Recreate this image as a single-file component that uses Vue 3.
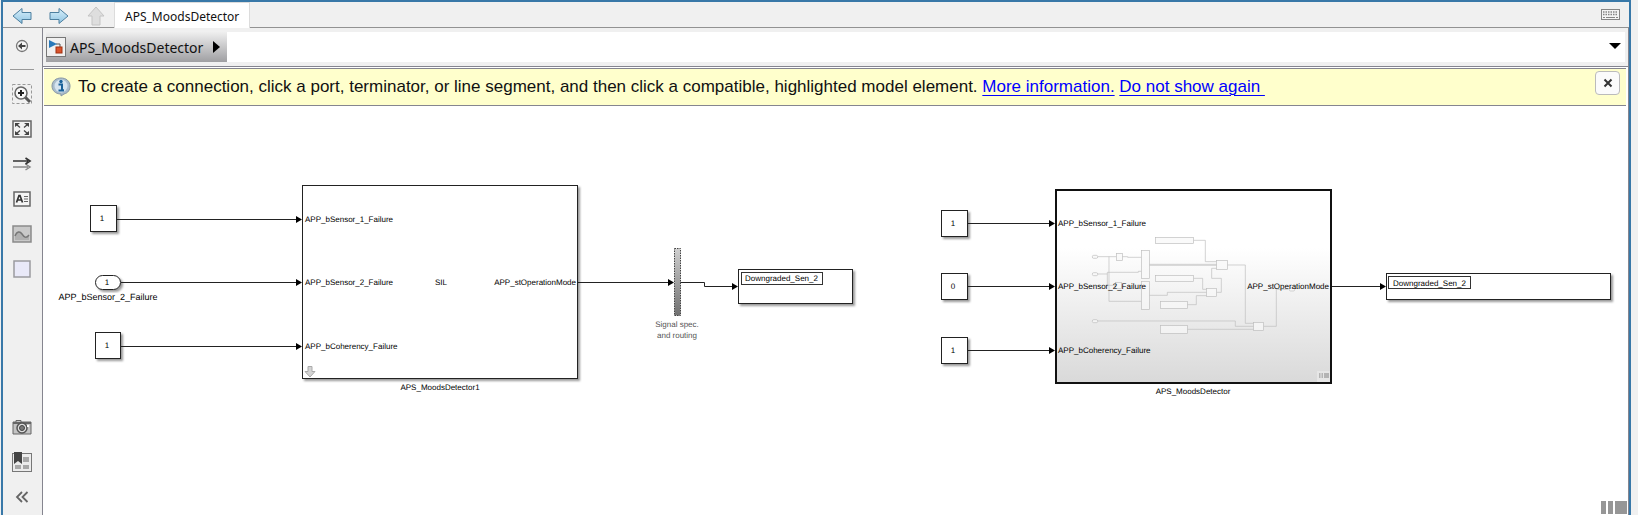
<script setup>
const leftRows = [
  { y: 219.5, from: 117, name: 'APP_bSensor_1_Failure' },
  { y: 282.5, from: 121, name: 'APP_bSensor_2_Failure' },
  { y: 346.5, from: 121, name: 'APP_bCoherency_Failure' },
]
const rightRows = [
  { y: 223.5, value: 1, name: 'APP_bSensor_1_Failure' },
  { y: 286.5, value: 0, name: 'APP_bSensor_2_Failure' },
  { y: 350.5, value: 1, name: 'APP_bCoherency_Failure' },
]
const arrow = (x, y) => `M${x - 6} ${y - 3.5}L${x} ${y}L${x - 6} ${y + 3.5}Z`
const baseline = (y) => Math.floor(y) + 3
</script>

<template>
  <div class="window">
    <header class="tabs">
      <button class="nav" aria-label="Back">
        <svg width="20" height="18" viewBox="0 0 20 18">
          <path d="M1 9L10 1.500V5.500H19V12.500H10V16.500Z" fill="url(#blueFill)" stroke="#4d7f9f" />
        </svg>
      </button>
      <button class="nav" aria-label="Forward">
        <svg width="20" height="18" viewBox="0 0 20 18">
          <path d="M19 9L10 1.500V5.500H1V12.500H10V16.500Z" fill="url(#blueFill)" stroke="#4d7f9f" />
        </svg>
      </button>
      <button class="nav" aria-label="Up">
        <svg width="18" height="20" viewBox="0 0 18 20">
          <path d="M9 1L17 10H13V19H5V10H1Z" fill="#dedede" stroke="#c4c4c4" />
        </svg>
      </button>
      <button class="tab">APS_MoodsDetector</button>
      <button class="keyboard" aria-label="Keyboard">
        <svg width="20" height="12" viewBox="0 0 20 12">
          <rect x=".5" y=".5" width="18" height="10" fill="#f4f4f4" stroke="#858585" />
          <path d="M2 3H17M2 5.500H17" stroke="#858585" stroke-width="1.500" stroke-dasharray="1.500 1" />
          <path d="M2 8.500H4M5 8.500H14M15 8.500H17" stroke="#858585" />
        </svg>
      </button>
    </header>

    <div class="body">
      <nav class="palette">
        <button class="tool" aria-label="Hide browser">
          <svg width="14" height="14" viewBox="0 0 14 14">
            <circle cx="7" cy="7" r="5.500" fill="#f5f5f5" stroke="#777" stroke-width="1.300" />
            <path d="M3 7L7 3.500V6H10.500V8H7V10.500Z" fill="#444" />
          </svg>
        </button>
        <hr class="rule" />
        <button class="tool" aria-label="Zoom">
          <svg width="20" height="20" viewBox="0 0 20 20">
            <rect x=".5" y=".5" width="19" height="19" fill="none" stroke="#999" stroke-dasharray="3 2" />
            <path d="M13 13L18 18" stroke="#555" stroke-width="3" />
            <circle cx="9" cy="9" r="6" fill="#f8f8f8" stroke="#666" stroke-width="1.500" />
            <path d="M6 9H12M9 6V12" stroke="#222" stroke-width="2" />
          </svg>
        </button>
        <button class="tool" aria-label="Fit to view">
          <svg width="20" height="18" viewBox="0 0 20 18">
            <rect x="1" y="1" width="18" height="16" fill="#f2f2f2" stroke="#666" stroke-width="1.500" />
            <path d="M3 3H8L3 7ZM17 3H12L17 7ZM3 15H8L3 11ZM17 15H12L17 11Z" fill="#444" />
            <path d="M4.500 4.500L8 7.500M15.500 4.500L12 7.500M4.500 13.500L8 10.500M15.500 13.500L12 10.500" stroke="#444" stroke-width="1.300" />
          </svg>
        </button>
        <button class="tool" aria-label="Sample time">
          <svg width="20" height="14" viewBox="0 0 20 14">
            <path d="M1 10H16M13.500 7L18 10L13.500 13" fill="none" stroke="#888" stroke-width="1.500" />
            <path d="M1 4H16M13.500 1L18 4L13.500 7" fill="none" stroke="#333" stroke-width="1.700" />
          </svg>
        </button>
        <button class="tool" aria-label="Annotation">
          <svg width="18" height="16" viewBox="0 0 18 16">
            <rect x="1" y="1" width="16" height="14" fill="#f5f5f5" stroke="#666" stroke-width="1.500" />
            <path d="M3.500 11.500L6 4.500H7L9.500 11.500M4.500 9H8.500" fill="none" stroke="#333" stroke-width="1.700" />
            <path d="M11 5.500H15M11 8H15M11 10.500H15" stroke="#666" />
          </svg>
        </button>
        <button class="tool" aria-label="Image">
          <svg width="20" height="18" viewBox="0 0 20 18">
            <rect x="1" y="1" width="18" height="16" fill="#c9c9c9" stroke="#8a8a8a" stroke-width="1.500" />
            <path d="M3 11C5 6 8 6 10 9S14 14 17 10V15H3Z" fill="#b0b0b0" />
            <path d="M3 11C5 6 8 6 10 9S14 14 17 10" fill="none" stroke="#777" stroke-width="1.500" />
          </svg>
        </button>
        <button class="tool" aria-label="Area">
          <svg width="18" height="18" viewBox="0 0 18 18">
            <rect x="1" y="1" width="16" height="16" fill="#e9e9f8" stroke="#9a9a9f" stroke-width="1.500" />
          </svg>
        </button>
        <button class="tool last-group" aria-label="Screenshot">
          <svg width="20" height="16" viewBox="0 1 20 16">
            <path d="M1 4H4V2.500H9V4H19V16H1Z" fill="#c4c4c4" stroke="#666" />
            <path d="M1 6H19V4H1Z" fill="#666" />
            <circle cx="10" cy="10" r="5" fill="#ddd" stroke="#555" stroke-width="1.500" />
            <circle cx="10" cy="10" r="2.500" fill="#777" stroke="#444" />
            <rect x="15" y="7" width="2" height="2" fill="#fff" />
          </svg>
        </button>
        <button class="tool" aria-label="Viewmarks">
          <svg width="20" height="20" viewBox="0 0 20 20">
            <rect x=".5" y="1.500" width="19" height="18" fill="#ececec" stroke="#777" />
            <path d="M11 5H17V10H11ZM3 13H9V17H3ZM11 13H17V17H11Z" fill="#a8a8a8" />
            <path d="M2 0H10V12L6 9L2 12Z" fill="#444" />
          </svg>
        </button>
        <button class="tool" aria-label="Collapse">
          <svg width="14" height="12" viewBox="0 0 14 12">
            <path d="M7 1L2 6L7 11M12.500 1L7.500 6L12.500 11" fill="none" stroke="#666" stroke-width="1.800" />
          </svg>
        </button>
      </nav>

      <main class="editor">
        <div class="path">
          <div class="path-field">
            <button class="crumb">
              <svg width="20" height="20" viewBox="0 0 20 20">
                <rect x=".5" y=".5" width="19" height="19" fill="#f0f0f0" stroke="#777" />
                <path d="M10 7H14V10" fill="none" stroke="#555" />
                <path d="M3 3L11 7L3 11Z" fill="#2878b8" />
                <rect x="10" y="10" width="6" height="6" fill="#d9532c" stroke="#a03010" />
              </svg>
              <span>APS_MoodsDetector</span>
              <svg class="crumb-next" width="7" height="12" viewBox="0 0 7 12"><path d="M0 0L7 6L0 12Z" /></svg>
            </button>
            <button class="drop" aria-label="Path history">
              <svg width="12" height="6" viewBox="0 0 12 6"><path d="M0 0H12L6 6Z" /></svg>
            </button>
          </div>
        </div>

        <div class="notice">
          <svg width="20" height="20" viewBox="0 0 20 20">
            <path d="M10 1C15 1 19 4 19 9C19 13 17 16 13 17L10 19V17C4 17 1 13 1 9C1 4 5 1 10 1Z" fill="#a9bccb" stroke="#8797a5" />
            <circle cx="10" cy="9" r="6.500" fill="#d6e4ef" />
            <circle cx="10" cy="4.500" r="1.700" fill="#1b6299" />
            <path d="M7.500 7.500H11V13H12.500M7.500 13.500H13" fill="none" stroke="#1b6299" stroke-width="2" />
          </svg>
          <p>
            To create a connection, click a port, terminator, or line segment, and then click a compatible, highlighted model element.
            <a href="#info">More information.</a> <a href="#hide">Do not show again&nbsp;</a>
          </p>
          <button class="close" aria-label="Close">
            <svg width="10" height="10" viewBox="0 0 10 10"><path d="M1.500 1.500L8.500 8.500M8.500 1.500L1.500 8.500" stroke="#333" stroke-width="2" /></svg>
          </button>
        </div>

        <div class="canvas">
          <svg class="diagram" viewBox="43 106 1585 409" preserveAspectRatio="xMinYMin meet">
            <defs>
              <linearGradient id="blueFill" x1="0" y1="0" x2="0" y2="1">
                <stop offset="0" stop-color="#d8effa" />
                <stop offset="1" stop-color="#8fc4e2" />
              </linearGradient>
              <linearGradient id="subFill" x1="0" y1="0" x2="0" y2="1">
                <stop offset=".3" stop-color="#fff" />
                <stop offset="1" stop-color="#d9d9d9" />
              </linearGradient>
              <linearGradient id="barFill" x1="0" y1="0" x2="0" y2="1">
                <stop offset="0" stop-color="#d0d0d0" />
                <stop offset="1" stop-color="#707070" />
              </linearGradient>
              <filter id="shade" x="-10%" y="-10%" width="130%" height="130%">
                <feDropShadow dx="2" dy="2" stdDeviation="1" flood-color="#000" flood-opacity=".4" />
              </filter>
            </defs>

            <g class="block">
              <rect x="90.500" y="205.500" width="26" height="26" />
              <rect x="95.500" y="275.500" width="25" height="14" rx="7" />
              <rect x="95.500" y="332.500" width="25" height="26" />
              <rect x="302.500" y="185.500" width="275" height="193" />
              <rect x="738.500" y="269.500" width="114" height="34" />
              <rect x="1386.500" y="273.500" width="224" height="26" />
              <rect v-for="r in rightRows" :key="r.y" x="941.500" :y="r.y - 13" width="26" height="26" />
            </g>
            <g class="inset">
              <rect x="741.500" y="272.500" width="81" height="12" />
              <rect x="1388.500" y="276.500" width="82" height="12" />
            </g>

            <rect class="subsystem" x="1056" y="190" width="275" height="193" />
            <g class="preview" transform="translate(1050 220) scale(.33333)">
              <path d="M431 61H466V125H500M298 133H500M298 136H500M532 135H586V310H611M431 175H458V208H470M298 226H352V217H470M412 254H439V227H470M500 217H514V175H485V145H500M143 303H556V319H611M412 328H611M641 319H679V208H715M143 110H199M217 110H233V112H274M143 162H172V157H265V154H274M177 110V244H274M172 162V196H196" />
              <rect x="316" y="52" width="115" height="18" />
              <rect x="316" y="166" width="115" height="18" />
              <rect x="331" y="244" width="81" height="21" />
              <rect x="331" y="317" width="81" height="23" />
              <rect x="274" y="91" width="24" height="84" />
              <rect x="274" y="184" width="24" height="84" />
              <rect x="199" y="100" width="18" height="21" />
              <rect x="196" y="187" width="18" height="18" />
              <rect x="500" y="122" width="32" height="26" />
              <rect x="470" y="205" width="30" height="24" />
              <rect x="611" y="307" width="30" height="24" />
              <rect x="127" y="106" width="16" height="9" rx="4" />
              <rect x="127" y="158" width="16" height="9" rx="4" />
              <rect x="127" y="299" width="16" height="9" rx="4" />
              <rect x="718" y="204" width="16" height="9" rx="4" />
            </g>
            <g>
              <rect x="1317" y="371" width="13" height="11" fill="#e6e6e6" />
              <path d="M1319 373H1320.500V378H1319ZM1321.500 373H1323V378H1321.500ZM1324 373H1329V378H1324Z" fill="#b4b4b4" />
            </g>
            <path d="M308 366.500H312V371.500H315L310 377L305 371.500H308Z" fill="#d4d4d4" stroke="#aaa" />

            <g v-for="r in leftRows" :key="r.y">
              <path class="wire" :d="`M${r.from} ${r.y}H298`" />
              <path :d="arrow(302, r.y)" />
              <text x="305" :y="baseline(r.y)">{{ r.name }}</text>
            </g>
            <g v-for="r in rightRows" :key="r.y">
              <path class="wire" :d="`M968 ${r.y}H1051`" />
              <path :d="arrow(1055, r.y)" />
              <text x="1058" :y="baseline(r.y)">{{ r.name }}</text>
              <text class="mid" x="953" :y="baseline(r.y)">{{ r.value }}</text>
            </g>

            <path class="wire" d="M578 282.500H670M680 282.500H704.500V286.500H734M1332 286.500H1382" />
            <path :d="arrow(674, 282.5)" />
            <path :d="arrow(738, 286.5)" />
            <path :d="arrow(1386, 286.5)" />
            <rect class="bar" x="674.500" y="248.500" width="6" height="67" />

            <text class="mid" x="102" y="221">1</text>
            <text class="mid" x="107" y="285">1</text>
            <text class="mid" x="107" y="348">1</text>
            <text class="mid caption" x="108" y="300">APP_bSensor_2_Failure</text>
            <text class="mid" x="441" y="285">SIL</text>
            <text class="end" x="576" y="285">APP_stOperationMode</text>
            <text class="end" x="1329" y="289">APP_stOperationMode</text>
            <text class="mid" x="440" y="390">APS_MoodsDetector1</text>
            <text class="mid" x="1193" y="394">APS_MoodsDetector</text>
            <text class="mid soft" x="677" y="327">Signal spec.</text>
            <text class="mid soft" x="677" y="338">and routing</text>
            <text x="745" y="281">Downgraded_Sen_2</text>
            <text x="1393" y="286">Downgraded_Sen_2</text>
          </svg>
          <div class="status"><i></i><i></i><i class="wide"></i></div>
        </div>
      </main>
    </div>
  </div>
</template>

<style>
body {
  margin: 0;
  background: #f0f0f0;
}
</style>

<style scoped>
.window {
  display: flex;
  flex-direction: column;
  box-sizing: border-box;
  min-height: 100vh;
  margin: 0 7px 0 1px;
  border: solid #3878a8;
  border-width: 2px 2px 0;
  background: #f0f0f0;
  font-family: "Noto Sans", "Open Sans", sans-serif;
  color: #111;
}
button {
  display: flex;
  align-items: center;
  justify-content: center;
  padding: 0;
  border: 0;
  background: none;
  color: inherit;
  font-family: inherit;
}
.tabs {
  display: flex;
  align-items: stretch;
  height: 25px;
  border-bottom: 1px solid #929292;
}
.nav {
  width: 37px;
}
.nav svg {
  margin-top: 3px;
}
.tab {
  box-sizing: border-box;
  margin-bottom: -1px;
  padding: 2px 10px 0;
  border: 1px solid #dcdcdc;
  border-bottom: 0;
  background: #fff;
  font-size: 12px;
}
.keyboard {
  margin-left: auto;
  padding-right: 8px;
}
.body {
  display: flex;
  flex: 1;
}
.palette {
  display: flex;
  flex-direction: column;
  align-items: center;
  box-sizing: border-box;
  flex: 0 0 39px;
  padding: 0 1px 1px 0;
}
.tool {
  width: 100%;
  height: 35px;
}
.last-group {
  margin-top: auto;
}
.rule {
  width: 24px;
  margin: 6px 0;
  border: 0;
  border-top: 1px solid #999;
}
.editor {
  display: flex;
  flex-direction: column;
  flex: 1;
  min-width: 0;
  border: 1px solid #85858f;
  border-width: 0 1px;
  background: #fff;
}
.path {
  padding: 4px 3px;
  border-bottom: 1px solid #85858f;
  background: #f0f0f0;
}
.path-field {
  display: flex;
  justify-content: space-between;
  height: 30px;
  background: #fff;
}
.crumb {
  gap: 4px;
  padding: 0 7px 0 0;
  background: linear-gradient(#efefef, #9f9fa2);
  font-size: 14px;
}
.crumb-next {
  margin-left: 6px;
}
.drop {
  padding: 0 4px 3px 0;
}
.notice {
  display: flex;
  align-items: center;
  height: 36px;
  margin: 1px 2px 0 1px;
  padding-left: 7px;
  border: solid #85858f;
  border-width: 1px 0;
  background: #ffffcc;
  font-family: "Liberation Sans", Arial, sans-serif;
  font-size: 17px;
}
.notice p {
  flex: 1;
  margin: 0 0 0 7px;
}
.notice a {
  color: #00f;
  text-decoration-thickness: 1px;
  text-underline-offset: 3px;
}
.close {
  align-self: flex-start;
  width: 25px;
  height: 24px;
  margin: 2px 6px 0 0;
  border: 1px solid #bbb;
  border-radius: 4px;
  background: #fbfbfb;
}
.canvas {
  position: relative;
  flex: 1;
}
.diagram {
  display: block;
  width: 100%;
  font-family: "Liberation Sans", Arial, sans-serif;
  font-size: 8px;
  text-rendering: geometricPrecision;
}
.block rect {
  fill: #fff;
  stroke: #222;
  filter: url(#shade);
}
.inset rect {
  fill: #fff;
  stroke: #333;
}
.subsystem {
  fill: url(#subFill);
  stroke: #111;
  stroke-width: 2px;
}
.preview {
  stroke: #bdbdbd;
  stroke-width: 2px;
}
.preview path {
  fill: none;
}
.preview rect {
  fill: #f8f8f8;
  fill-opacity: 0.7;
}
.wire {
  fill: none;
  stroke: #222;
}
.bar {
  fill: url(#barFill);
  stroke: #444;
  stroke-dasharray: 1.5 1;
}
.mid {
  text-anchor: middle;
}
.end {
  text-anchor: end;
}
.caption {
  font-size: 9px;
}
.soft {
  fill: #555;
}
.status {
  position: absolute;
  right: 1px;
  bottom: 1px;
  display: flex;
  gap: 2px;
}
.status i {
  width: 5px;
  height: 13px;
  background: #969696;
}
.status .wide {
  width: 12px;
}
</style>
